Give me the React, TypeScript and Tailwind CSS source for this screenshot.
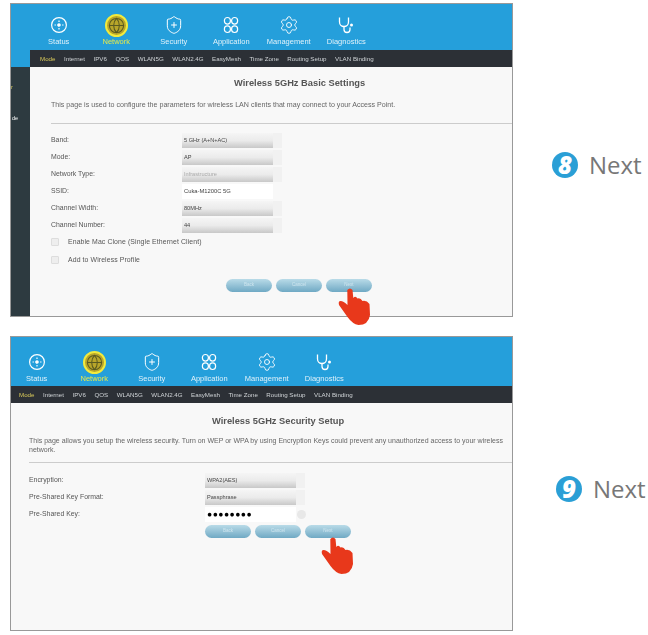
import React from "react";
import { Settings, ShieldPlus, Globe } from "lucide-react";

const StatusIcon = () => (
  <svg width="18" height="18" viewBox="0 0 18 18" fill="none" stroke="white" strokeWidth="1.2">
    <circle cx="9" cy="9" r="7.4" />
    <circle cx="9" cy="9" r="1.2" fill="white" />
    <path d="M9 4.5v1.4M9 12.1v1.4M4.5 9h1.4M12.1 9h1.4" />
  </svg>
);
const AppIcon = () => (
  <svg width="18" height="18" viewBox="0 0 18 18" fill="none" stroke="white" strokeWidth="1.2">
    <rect x="2.4" y="1.5" width="6" height="6.6" rx="3" />
    <rect x="9.6" y="1.5" width="6" height="6.6" rx="3" />
    <rect x="2.4" y="9.9" width="6" height="6.6" rx="3" />
    <rect x="9.6" y="9.9" width="6" height="6.6" rx="3" />
  </svg>
);
const DiagIcon = () => (
  <svg width="18" height="18" viewBox="0 0 18 18" fill="none" stroke="white" strokeWidth="1.3">
    <path d="M2.5 1.5v4.5a4.5 4.5 0 0 0 9 0V1.5" />
    <path d="M7 10.5v3q0 3 3 3q3 0 3-3v-2" />
    <circle cx="14.5" cy="9" r="1.5" fill="white" stroke="none" />
  </svg>
);
const NetIcon = () => (
  <div className="flex h-[23px] w-[23px] items-center justify-center rounded-full border-[2px] border-[#f2ea3c] bg-[#b8a52a]">
    <Globe size={17} color="#5a5a20" strokeWidth={1.5} />
  </div>
);
const Hand = () => (
  <svg width="34" height="38" viewBox="-1 -1 33 38">
    <path
      fill="#e8381b"
      d="M8.8 2Q11.5 -1 14 2L14.8 10Q17 7.5 19 10.5Q22 9.5 24 13Q28 12 31 16L31.5 27Q30 37 20 37Q14 36 9 29L0.5 17Q-0.5 13 2 13Q5 13 9 17Z"
    />
  </svg>
);

const navItems = [
  { label: "Status", icon: <StatusIcon /> },
  { label: "Network", icon: <NetIcon />, active: true },
  { label: "Security", icon: <ShieldPlus size={20} color="white" strokeWidth={1.2} /> },
  { label: "Application", icon: <AppIcon /> },
  { label: "Management", icon: <Settings size={20} color="white" strokeWidth={1.1} /> },
  { label: "Diagnostics", icon: <DiagIcon /> },
];
const subItems = ["Mode", "Internet", "IPV6", "QOS", "WLAN5G", "WLAN2.4G", "EasyMesh", "Time Zone", "Routing Setup", "VLAN Binding"];

const TopNav = () => (
  <div className="flex items-start">
    {navItems.map((n) => (
      <div key={n.label} className="flex w-[57.5px] flex-col items-center">
        <div className="flex h-[24px] items-center justify-center">{n.icon}</div>
        <span className={`whitespace-nowrap text-[7.5px] leading-[9px] ${n.active ? "text-[#e6e84a]" : "text-[#dff1fa]"}`}>{n.label}</span>
      </div>
    ))}
  </div>
);
const SubNav = () => (
  <div className="flex h-full items-center gap-[8.5px] whitespace-nowrap text-[6.2px] text-[#cfd3d6]">
    {subItems.map((s, i) => (
      <span key={s} className={i === 0 ? "text-[#d8c95a]" : ""}>{s}</span>
    ))}
  </div>
);
const Select = ({ children, faint }: { children: React.ReactNode; faint?: boolean }) => (
  <div className="flex h-[15px] w-[91px] items-center bg-linear-to-b from-[#f5f5f5] via-[#ebebeb] to-[#c8c8c8] pl-[2px] text-[5.6px] shadow-[9px_0_0_#f1f1f1]">
    <span className={faint ? "text-[#aaa]" : "text-[#444]"}>{children}</span>
  </div>
);
const Input = ({ children, dots }: { children: React.ReactNode; dots?: boolean }) => (
  <div className={`flex h-[15px] w-[91px] items-center bg-white pl-[2px] ${dots ? "text-[8.5px] tracking-[0.5px] text-black" : "text-[5.8px] text-[#444]"}`}>{children}</div>
);
const Row = ({ label, w, children }: { label: string; w: string; children: React.ReactNode }) => (
  <div className="flex h-[17px] items-center">
    <span className={`${w} shrink-0 text-[6.9px] text-[#555]`}>{label}</span>
    {children}
  </div>
);
const Check = ({ label }: { label: string }) => (
  <div className="flex h-[18px] items-center">
    <span className="mr-[9px] h-[8px] w-[8px] rounded-[1px] border border-[#ddd] bg-[#eee]" />
    <span className="text-[6.9px] tracking-[0.1px] text-[#555]">{label}</span>
  </div>
);
const Buttons = () => (
  <div className="flex gap-[4px]">
    {["Back", "Cancel", "Next"].map((b) => (
      <div key={b} className="flex h-[13px] w-[46px] items-center justify-center rounded-full bg-linear-to-b from-[#b9dbe8] to-[#6fa9c4] text-[4.5px] text-[#cfe6ef]">{b}</div>
    ))}
  </div>
);
const Badge = ({ n }: { n: string }) => (
  <span className="flex h-[26px] w-[26px] items-center justify-center rounded-full bg-[#2a9fd6] text-[24px] font-extrabold italic leading-none text-white [font-family:'Open_Sans',sans-serif]">{n}</span>
);

export default function App() {
  return (
    <div className="h-[635px] w-[648px] overflow-hidden bg-white pt-[3px] pl-[10px] [font-family:'Liberation_Sans',sans-serif]">
      {/* Step 8 */}
      <div className="flex items-center">
        <div className="relative h-[314px] w-[503px] shrink-0 border-[1.5px] border-[#999]">
          <div className="flex h-full flex-col overflow-hidden bg-[#f8f8f8] blur-[0.6px]">
            <div className="h-[46px] shrink-0 bg-[#259fdb] pt-[9px] pl-[19px]"><TopNav /></div>
            <div className="flex min-h-0 flex-1">
              <div className="flex w-[19px] shrink-0 flex-col bg-[#2d3a40]">
                <div className="h-[17px] bg-[#259fdb]" />
                <div className="pt-[18px] text-[5.5px] leading-none text-[#d8c95a]">r</div>
                <div className="pt-[25px] pl-[1px] text-[5.5px] leading-none text-white">de</div>
              </div>
              <div className="flex min-w-0 flex-1 flex-col">
                <div className="h-[17px] shrink-0 bg-[#2c3036] pl-[10px]"><SubNav /></div>
                <div className="pt-[10px] pl-[21px]">
                  <h1 className="ml-[183px] text-[9.3px] font-bold leading-[12px] text-[#555]">Wireless 5GHz Basic Settings</h1>
                  <p className="mt-[12px] whitespace-nowrap text-[7.1px] leading-[9px] text-[#666]">This page is used to configure the parameters for wireless LAN clients that may connect to your Access Point.</p>
                  <div className="mt-[13px] h-px bg-[#ccc]" />
                  <div className="mt-[8px]">
                    <Row label="Band:" w="w-[131px]"><Select>5 GHz (A+N+AC)</Select></Row>
                    <Row label="Mode:" w="w-[131px]"><Select>AP</Select></Row>
                    <Row label="Network Type:" w="w-[131px]"><Select faint>Infrastructure</Select></Row>
                    <Row label="SSID:" w="w-[131px]"><Input>Cuka-M1200C 5G</Input></Row>
                    <Row label="Channel Width:" w="w-[131px]"><Select>80MHz</Select></Row>
                    <Row label="Channel Number:" w="w-[131px]"><Select>44</Select></Row>
                  </div>
                  <div className="-mt-[1px]">
                    <Check label="Enable Mac Clone (Single Ethernet Client)" />
                    <Check label="Add to Wireless Profile" />
                  </div>
                  <div className="mt-[10px] ml-[175px]"><Buttons /></div>
                </div>
              </div>
            </div>
          </div>
          <div className="absolute top-[283px] left-[326px]"><Hand /></div>
        </div>
        <div className="ml-[39px] flex items-center gap-[11px] pt-[10px]">
          <Badge n="8" />
          <span className="text-[24px] leading-none text-[#777] [font-family:'Open_Sans',sans-serif]">Next</span>
        </div>
      </div>

      {/* Step 9 */}
      <div className="mt-[19px] flex items-center">
        <div className="relative h-[295px] w-[503px] shrink-0 border-[1.5px] border-[#999]">
          <div className="flex h-full flex-col overflow-hidden bg-[#f8f8f8] blur-[0.6px]">
            <div className="h-[49px] shrink-0 bg-[#259fdb] pt-[13px]">
              <div className="-ml-[3px]"><TopNav /></div>
            </div>
            <div className="h-[17px] shrink-0 bg-[#2c3036] pl-[8px]"><SubNav /></div>
            <div className="pt-[12px] pl-[18px]">
              <h1 className="ml-[183px] text-[9.3px] font-bold leading-[12px] text-[#555]">Wireless 5GHz Security Setup</h1>
              <p className="mt-[9px] text-[7px] leading-[9px] text-[#666]">This page allows you setup the wireless security. Turn on WEP or WPA by using Encryption Keys could prevent any unauthorized access to your wireless network.</p>
              <div className="mt-[8px] h-px bg-[#ccc]" />
              <div className="mt-[9px]">
                <Row label="Encryption:" w="w-[176px]"><Select>WPA2(AES)</Select></Row>
                <Row label="Pre-Shared Key Format:" w="w-[176px]"><Select>Passphrase</Select></Row>
                <Row label="Pre-Shared Key:" w="w-[176px]">
                  <Input dots>●●●●●●●●</Input>
                  <span className="ml-[1px] h-[9px] w-[9px] rounded-full bg-[#e8e8e8]" />
                </Row>
              </div>
              <div className="mt-[2px] ml-[176px]"><Buttons /></div>
            </div>
          </div>
          <div className="absolute top-[199px] left-[309px]"><Hand /></div>
        </div>
        <div className="ml-[43px] flex items-center gap-[11px] pt-[10px]">
          <Badge n="9" />
          <span className="text-[24px] leading-none text-[#777] [font-family:'Open_Sans',sans-serif]">Next</span>
        </div>
      </div>
    </div>
  );
}
